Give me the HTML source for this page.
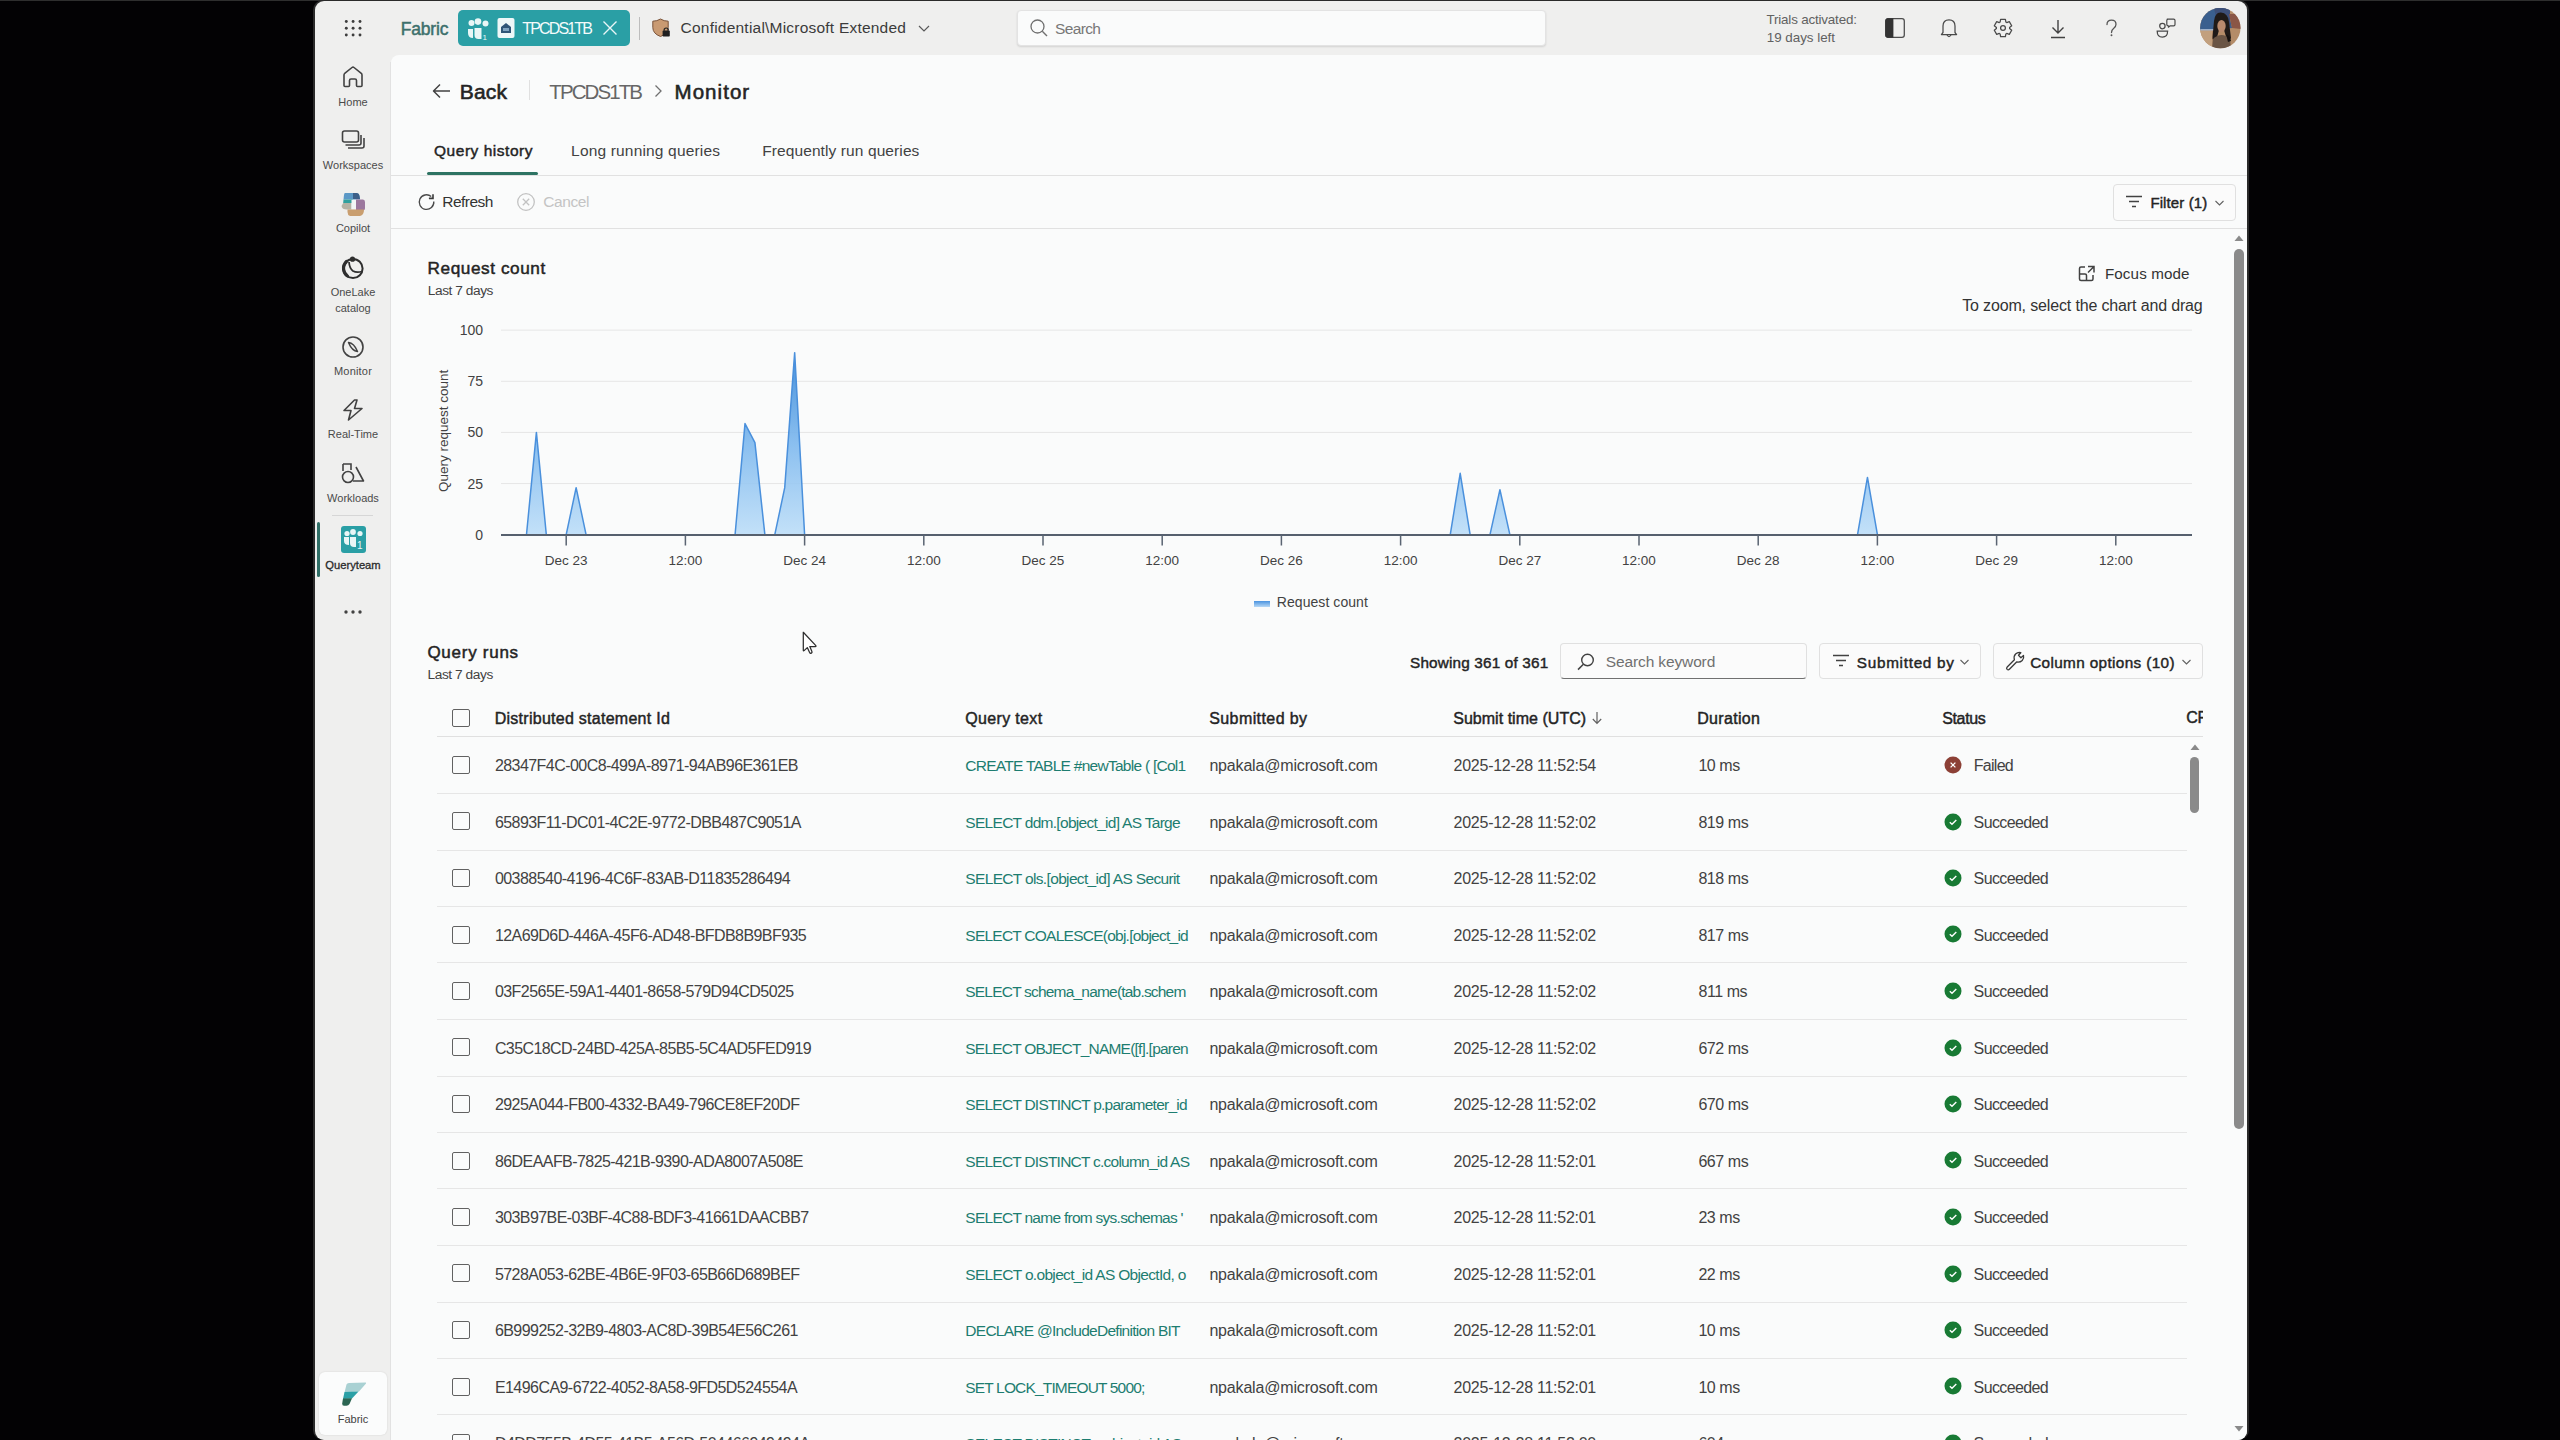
<!DOCTYPE html>
<html><head><meta charset="utf-8"><title>Monitor</title>
<style>
html,body{margin:0;padding:0;width:2560px;height:1440px;overflow:hidden;background:#030204;font-family:"Liberation Sans", sans-serif;}
.t{position:absolute;white-space:nowrap;}
.b{position:absolute;}
#win{position:absolute;left:315px;top:1px;width:1932px;height:1439px;background:#efefee;}
</style></head><body>

<div class="b" style="left:0px;top:0px;width:2560px;height:1px;background:#2e2e2e;"></div>
<div class="b" style="left:313px;top:0px;width:1936px;height:1440px;background:#2a2a2a;border-radius:10px;"></div>
<div id="clip" style="position:absolute;left:0;top:0;width:2560px;height:1440px;clip-path:inset(1px 313px 0px 315px round 9px);">
<div id="win"></div>
<div class="b" style="left:391px;top:55px;width:1856px;height:1385px;background:#fafbfb;border-top-left-radius:8px;"></div>
<div class="b" style="left:390px;top:62px;width:1px;height:1378px;background:#e2e2e2;"></div>
<svg class="b" style="left:340px;top:15px;" width="26" height="26" viewBox="0 0 26 26"><circle cx="6.300000000000011" cy="6.5" r="1.45" fill="#3d3d3d"/><circle cx="6.300000000000011" cy="13.3" r="1.45" fill="#3d3d3d"/><circle cx="6.300000000000011" cy="20.0" r="1.45" fill="#3d3d3d"/><circle cx="13.100000000000023" cy="6.5" r="1.45" fill="#3d3d3d"/><circle cx="13.100000000000023" cy="13.3" r="1.45" fill="#3d3d3d"/><circle cx="13.100000000000023" cy="20.0" r="1.45" fill="#3d3d3d"/><circle cx="20.0" cy="6.5" r="1.45" fill="#3d3d3d"/><circle cx="20.0" cy="13.3" r="1.45" fill="#3d3d3d"/><circle cx="20.0" cy="20.0" r="1.45" fill="#3d3d3d"/></svg>
<div class="t" style="left:400.8px;top:16.74px;font-size:17.5px;line-height:24px;color:#3d706c;font-weight:400;letter-spacing:-0.205px;-webkit-text-stroke:0.49px #3d706c;">Fabric</div>
<div class="b" style="left:458px;top:10px;width:172px;height:36px;background:#2a9fa5;border-radius:5px;"></div>
<svg class="b" style="left:467px;top:18px;" width="24" height="24" viewBox="0 0 24 24">
<circle cx="4.5" cy="5" r="3" fill="#e8f6f6"/>
<circle cx="11" cy="3.6" r="3.3" fill="#e8f6f6"/>
<circle cx="18.5" cy="5.6" r="3" fill="#e8f6f6"/>
<path d="M1 11 h5 v9 q-5 0 -5 -5z" fill="#e8f6f6"/>
<path d="M7.5 10 h7 v11 h-3 q-4 0 -4 -4z" fill="#e8f6f6"/>
<text x="15.5" y="22" font-size="8" fill="#e8f6f6" font-family="Liberation Sans">1</text>
</svg>
<svg class="b" style="left:497px;top:17px;" width="18" height="22" viewBox="0 0 18 22">
<rect x="0.5" y="1" width="17" height="20" rx="2" fill="#eef7f8"/>
<path d="M4 10 L9 6 L14 10 V16 H4z" fill="#2f5577"/>
<rect x="6" y="11" width="6" height="3" fill="#7fa3c0"/>
</svg>
<div class="t" style="left:522.2px;top:17.86px;font-size:16px;line-height:22px;color:#f4fbfb;font-weight:400;letter-spacing:-1.830px;">TPCDS1TB</div>
<svg class="b" style="left:602px;top:20px;" width="16" height="16" viewBox="0 0 16 16"><path d="M1.5 1.5 L14.5 14.5 M14.5 1.5 L1.5 14.5" stroke="#eaf6f6" stroke-width="1.4"/></svg>
<div class="b" style="left:639px;top:17px;width:1px;height:23px;background:#bdbdbd;"></div>
<svg class="b" style="left:650px;top:16px;" width="24" height="24" viewBox="0 0 24 24">
<path d="M10.5 3 Q14 5.2 18.2 5.2 V11.5 Q18.2 17.6 10.5 20.5 Q2.8 17.6 2.8 11.5 V5.2 Q7 5.2 10.5 3z" fill="#c99a72" stroke="#7a5238" stroke-width="1"/>
<rect x="12.6" y="14.6" width="7.2" height="6" rx="0.8" fill="#1f1f1f"/>
<path d="M14.2 14.8 V13.2 Q16.2 10.8 18.2 13.2 V14.8" stroke="#1f1f1f" stroke-width="1.2" fill="none"/>
</svg>
<div class="t" style="left:680.6px;top:17.23px;font-size:15.5px;line-height:22px;color:#3b3b3b;font-weight:400;letter-spacing:0.216px;">Confidential\Microsoft Extended</div>
<svg class="b" style="left:917px;top:23px;" width="14" height="10" viewBox="0 0 14 10"><path d="M2 3 L7 8 L12 3" stroke="#5a5a5a" stroke-width="1.2" fill="none"/></svg>
<div class="b" style="left:1017px;top:10px;width:527px;height:34px;background:#fafbfb;border:1px solid #e3e3e3;border-radius:4px;box-shadow:0 1px 2px rgba(0,0,0,0.12);"></div>
<svg class="b" style="left:1029px;top:18px;" width="20" height="20" viewBox="0 0 20 20"><circle cx="8.5" cy="8.5" r="6.5" stroke="#707070" stroke-width="1.3" fill="none"/><path d="M13.3 13.3 L18 18" stroke="#707070" stroke-width="1.4"/></svg>
<div class="t" style="left:1055.0px;top:17.53px;font-size:15.5px;line-height:22px;color:#777777;font-weight:400;letter-spacing:-0.625px;">Search</div>
<div class="t" style="left:1766.5px;top:10.46px;font-size:13.4px;line-height:19px;color:#616161;font-weight:400;letter-spacing:-0.180px;">Trials activated:</div>
<div class="t" style="left:1766.8px;top:28.36px;font-size:13.4px;line-height:19px;color:#616161;font-weight:400;letter-spacing:-0.029px;">19 days left</div>
<svg class="b" style="left:1884px;top:17px;" width="22" height="22" viewBox="0 0 22 22"><rect x="1.7" y="1.7" width="18.6" height="18.6" rx="2.3" stroke="#4e4e4e" stroke-width="1.3" fill="none"/><path d="M1.3 4 Q1.3 1.3 4 1.3 H9.4 V20.7 H4 Q1.3 20.7 1.3 18z" fill="#333333"/></svg>
<svg class="b" style="left:1939px;top:17px;" width="20" height="22" viewBox="0 0 20 22"><path d="M4 15.5 V9 Q4 2.8 10 2.8 Q16 2.8 16 9 V15.5 L17.6 17.6 H2.4z" stroke="#4a4a4a" stroke-width="1.25" fill="none" stroke-linejoin="round"/><path d="M8 18 Q10 21 12 18" stroke="#4a4a4a" stroke-width="1.25" fill="none"/></svg>
<svg class="b" style="left:1993px;top:18px;" width="20" height="20" viewBox="0 0 20 20"><path d="M7.13 4.06 L7.60 1.33 L12.40 1.33 L12.87 4.06 L13.71 4.54 L16.31 3.58 L18.71 7.74 L16.58 9.51 L16.58 10.49 L18.71 12.26 L16.31 16.42 L13.71 15.46 L12.87 15.94 L12.40 18.67 L7.60 18.67 L7.13 15.94 L6.29 15.46 L3.69 16.42 L1.29 12.26 L3.42 10.49 L3.42 9.51 L1.29 7.74 L3.69 3.58 L6.29 4.54z" stroke="#4a4a4a" stroke-width="1.25" fill="none" stroke-linejoin="round"/><circle cx="10" cy="10" r="2.4" stroke="#4a4a4a" stroke-width="1.25" fill="none"/></svg>
<svg class="b" style="left:2049px;top:19px;" width="18" height="20" viewBox="0 0 18 20"><path d="M9 1 V14 M3.5 8.5 L9 14 L14.5 8.5 M2 18.5 H16" stroke="#424242" stroke-width="1.4" fill="none"/></svg>
<svg class="b" style="left:2104px;top:18px;" width="14" height="20" viewBox="0 0 14 20"><path d="M3 6.5 Q3 2.2 7.5 2.2 Q12 2.2 12 6.3 Q12 8.6 9.8 10.2 Q7.5 11.9 7.5 14.5" stroke="#555" stroke-width="1.3" fill="none" stroke-linecap="round"/><circle cx="7.5" cy="17.3" r="0.95" fill="#555"/></svg>
<svg class="b" style="left:2155px;top:17px;" width="22" height="22" viewBox="0 0 22 22"><circle cx="7.4" cy="9.1" r="2.7" stroke="#4a4a4a" stroke-width="1.25" fill="none"/><path d="M2.2 14.2 H12.6 Q12.6 20 7.4 20 Q2.2 20 2.2 14.2z" stroke="#4a4a4a" stroke-width="1.25" fill="none"/><path d="M12.2 2.2 H18.6 Q20 2.2 20 3.6 V7.4 Q20 8.8 18.6 8.8 H15.2 L13.4 10.2 V8.8 Q11.8 8.8 11.8 7.4 V3.6 Q11.8 2.2 13.2 2.2z" stroke="#4a4a4a" stroke-width="1.2" fill="none" stroke-linejoin="round"/></svg>
<svg class="b" style="left:2200px;top:8px;" width="41" height="41" viewBox="0 0 41 41">
<defs><clipPath id="av"><circle cx="20.3" cy="20.1" r="20.2"/></clipPath></defs>
<g clip-path="url(#av)">
<rect width="41" height="41" fill="#b48c68"/>
<rect x="0" y="22" width="12" height="19" fill="#c2a07e"/>
<path d="M0 0 H30 L29 6 L32 20 L12 22 L0 22z" fill="#3a5f8e"/>
<path d="M14 0 H30 V18 H18z" fill="#3d4f78"/>
<path d="M29 6 L41 6 V21 L32 20z" fill="#8a5646"/>
<rect x="0" y="21" width="14" height="1.5" fill="#9fb0c8"/>
<path d="M14 13 Q15 4 21 4.5 Q28 5 29 14 L31 30 Q30 33 27 32 L24 22 H19 L16 33 Q12 33 12.5 29z" fill="#1f1a18"/>
<ellipse cx="21.5" cy="18" rx="4.2" ry="6" fill="#b88a6e"/>
<path d="M12 41 L13 31 Q17 27 21.5 27 Q26 27 30 31 L31 41z" fill="#6a5545"/>
<path d="M26 26 Q30 28 31 33 L28 34z" fill="#161210"/>
</g>
</svg>
<svg class="b" style="left:341px;top:65px;" width="24" height="24" viewBox="0 0 24 24"><path d="M3 20.5 V10 Q3 9 4 8.2 L11 2.5 Q12 1.7 13 2.5 L20 8.2 Q21 9 21 10 V20.5 Q21 21.5 20 21.5 H16.5 Q15.5 21.5 15.5 20.5 V15.5 Q15.5 14 14 14 H10 Q8.5 14 8.5 15.5 V20.5 Q8.5 21.5 7.5 21.5 H4 Q3 21.5 3 20.5z" stroke="#424242" stroke-width="1.6" fill="none" stroke-linejoin="round"/></svg>
<div class="t" style="left:153px;width:400px;text-align:center;top:94.5px;font-size:11px;line-height:15px;color:#4a4a4a;font-weight:400;">Home</div>
<svg class="b" style="left:341px;top:129px;" width="25" height="23" viewBox="0 0 25 23"><rect x="1.5" y="2" width="16" height="11" rx="2" stroke="#424242" stroke-width="1.6" fill="none"/><path d="M20 6 V14 Q20 16 18 16 H4.5" stroke="#424242" stroke-width="1.6" fill="none"/><path d="M23 9 V17 Q23 19 21 19 H7" stroke="#424242" stroke-width="1.6" fill="none"/></svg>
<div class="t" style="left:153px;width:400px;text-align:center;top:158.0px;font-size:11px;line-height:15px;color:#4a4a4a;font-weight:400;">Workspaces</div>
<svg class="b" style="left:335px;top:185px;" width="36" height="36" viewBox="0 0 36 36">
<path d="M10 8 Q11 8 12 8 H21 Q24 8 24.5 11 L25 14.5 H8.5 L9 10 Q9.3 8 10 8z" fill="#5b98c6"/>
<path d="M18 8 H21.5 Q24 8 24.5 11 L25 14 H18z" fill="#3c5f88"/>
<path d="M8.5 14.5 H17.5 V18 H8.2z" fill="#30a09e"/>
<path d="M8.2 18 H16.5 V24.5 H12 Q7 24.5 6.5 21z" fill="#b4b2a4"/>
<path d="M16.5 15 H21 V24 H16.5z" fill="#f2f6f6"/>
<path d="M21 14.5 H28 Q30 14.5 30 17 V23 Q30 25.5 27.5 25.5 H21z" fill="#9c789e"/>
<path d="M12.5 24.5 H29 Q29 30 25 31 H15 Q12.5 30 12.5 27z" fill="#c99e6f"/>
</svg>
<div class="t" style="left:153px;width:400px;text-align:center;top:221.0px;font-size:11px;line-height:15px;color:#4a4a4a;font-weight:400;">Copilot</div>
<svg class="b" style="left:341px;top:256px;" width="24" height="24" viewBox="0 0 24 24"><circle cx="12" cy="12.5" r="9.6" stroke="#2e2e2e" stroke-width="2" fill="none"/><path d="M5.5 5.5 Q2 9 2.6 13.5 Q3.3 18 6.5 20" stroke="#2e2e2e" stroke-width="3.2" fill="none" stroke-linecap="round"/><circle cx="11.5" cy="3.2" r="2.6" fill="#2e2e2e"/><path d="M8 6 Q8.5 12.5 12 15 Q15.5 17 21 15.5" stroke="#2e2e2e" stroke-width="1.8" fill="none"/></svg>
<div class="t" style="left:153px;width:400px;text-align:center;top:285.0px;font-size:11px;line-height:15px;color:#4a4a4a;font-weight:400;">OneLake</div>
<div class="t" style="left:153px;width:400px;text-align:center;top:300.5px;font-size:11px;line-height:15px;color:#4a4a4a;font-weight:400;">catalog</div>
<svg class="b" style="left:341px;top:335px;" width="24" height="24" viewBox="0 0 24 24"><circle cx="12" cy="12" r="10" stroke="#424242" stroke-width="1.6" fill="none"/><path d="M7.5 7.5 Q13 8 16.5 16.5 Q11 16 7.5 7.5z" stroke="#424242" stroke-width="1.5" fill="none" stroke-linejoin="round"/></svg>
<div class="t" style="left:153px;width:400px;text-align:center;top:364.0px;font-size:11px;line-height:15px;color:#4a4a4a;font-weight:400;letter-spacing:0.2px;">Monitor</div>
<svg class="b" style="left:341px;top:398px;" width="24" height="24" viewBox="0 0 24 24"><path d="M13.5 2 L3 12.5 H10 L7.5 22 L21 10.5 H13.5 L16 2z" stroke="#424242" stroke-width="1.6" fill="none" stroke-linejoin="round"/></svg>
<div class="t" style="left:153px;width:400px;text-align:center;top:427.0px;font-size:11px;line-height:15px;color:#4a4a4a;font-weight:400;">Real-Time</div>
<svg class="b" style="left:341px;top:462px;" width="24" height="22" viewBox="0 0 24 22"><path d="M2 2 H10 V8" stroke="#424242" stroke-width="1.6" fill="none"/><path d="M2 2 V9" stroke="#424242" stroke-width="1.6"/><circle cx="7" cy="15" r="5.5" stroke="#424242" stroke-width="1.6" fill="none"/><path d="M15 5 L22.5 19 H12" stroke="#424242" stroke-width="1.6" fill="none" stroke-linejoin="round"/></svg>
<div class="t" style="left:153px;width:400px;text-align:center;top:490.5px;font-size:11px;line-height:15px;color:#4a4a4a;font-weight:400;">Workloads</div>
<div class="b" style="left:332px;top:515px;width:41px;height:1px;background:#d6d6d6;"></div>
<div class="b" style="left:317px;top:522px;width:3px;height:55px;background:#2f6e66;border-radius:2px;"></div>
<svg class="b" style="left:341px;top:526px;" width="25" height="27" viewBox="0 0 25 27">
<rect x="0" y="0" width="25" height="27" rx="3" fill="#2a9fa5"/>
<circle cx="6" cy="7.5" r="2.6" fill="#e8f6f6"/><circle cx="12" cy="6" r="2.9" fill="#e8f6f6"/><circle cx="19" cy="7.5" r="2.6" fill="#e8f6f6"/>
<path d="M3 11 h5 v8 q-5 0 -5 -4z" fill="#e8f6f6"/><path d="M9 11 h6 v10 h-2 q-4 0 -4 -4z" fill="#e8f6f6"/>
<text x="16" y="23" font-size="10" fill="#e8f6f6" font-family="Liberation Sans">1</text>
</svg>
<div class="t" style="left:153px;width:400px;text-align:center;top:556.5px;font-size:11.2px;line-height:16px;color:#2a2a2a;font-weight:400;-webkit-text-stroke:0.3px #2a2a2a;">Queryteam</div>
<svg class="b" style="left:343px;top:607px;" width="20" height="10" viewBox="0 0 20 10"><circle cx="3" cy="5" r="1.7" fill="#424242"/><circle cx="10" cy="5" r="1.7" fill="#424242"/><circle cx="17" cy="5" r="1.7" fill="#424242"/></svg>
<div class="b" style="left:319px;top:1372px;width:68px;height:63px;background:#fbfcfc;border-radius:6px;box-shadow:0 0 2px rgba(0,0,0,0.12);"></div>
<svg class="b" style="left:338px;top:1380px;" width="30" height="30" viewBox="0 0 30 30">
<path d="M8.5 4.5 Q9 3 11 3 L27.5 2.5 Q28.5 2.5 28 3.5 L21 11.5 L6.5 12.5z" fill="#a9d1d3"/>
<path d="M6.5 12 L20.5 11.5 L14 18.5 L5 19z" fill="#2ba0a6"/>
<path d="M5 18.5 L14 18.2 L11.5 24 Q10.5 25.8 8.5 25.8 L6 25.8 Q4 25.8 4.2 23.5z" fill="#2b6552"/>
</svg>
<div class="t" style="left:153px;width:400px;text-align:center;top:1411.5px;font-size:11px;line-height:15px;color:#424242;font-weight:400;">Fabric</div>
<svg class="b" style="left:432px;top:83px;" width="19" height="16" viewBox="0 0 19 16"><path d="M8 1.5 L1.5 8 L8 14.5 M1.5 8 H18" stroke="#424242" stroke-width="1.5" fill="none" stroke-linejoin="round"/></svg>
<div class="t" style="left:459.7px;top:77.02px;font-size:21px;line-height:29px;color:#242424;font-weight:400;letter-spacing:0.209px;-webkit-text-stroke:0.59px #242424;">Back</div>
<div class="b" style="left:529px;top:80px;width:1px;height:20px;background:#e0e0e0;"></div>
<div class="t" style="left:549.3px;top:76.70px;font-size:20.5px;line-height:29px;color:#666666;font-weight:400;letter-spacing:-1.921px;">TPCDS1TB</div>
<svg class="b" style="left:653px;top:84px;" width="10" height="14" viewBox="0 0 10 14"><path d="M2.5 1.5 L8 7 L2.5 12.5" stroke="#707070" stroke-width="1.3" fill="none"/></svg>
<div class="t" style="left:674.5px;top:76.70px;font-size:20.5px;line-height:29px;color:#242424;font-weight:400;letter-spacing:1.054px;-webkit-text-stroke:0.58px #242424;">Monitor</div>
<div class="t" style="left:434.0px;top:139.73px;font-size:15.5px;line-height:22px;color:#242424;font-weight:400;letter-spacing:0.526px;-webkit-text-stroke:0.44px #242424;">Query history</div>
<div class="t" style="left:571.1px;top:139.73px;font-size:15.5px;line-height:22px;color:#424242;font-weight:400;letter-spacing:0.169px;">Long running queries</div>
<div class="t" style="left:762.2px;top:139.73px;font-size:15.5px;line-height:22px;color:#424242;font-weight:400;letter-spacing:0.099px;">Frequently run queries</div>
<div class="b" style="left:391px;top:175px;width:1856px;height:1px;background:#e1e1e1;"></div>
<div class="b" style="left:427px;top:172px;width:111px;height:3px;background:#2d7363;border-radius:2px;"></div>
<svg class="b" style="left:417px;top:193px;" width="20" height="20" viewBox="0 0 20 20"><path d="M14.2 3.5 A7.3 7.3 0 1 0 16.8 8.5" stroke="#4a4a4a" stroke-width="1.35" fill="none"/><path d="M16 1.2 V5.4 H11.9" stroke="#3a3a3a" stroke-width="1.6" fill="none" stroke-linejoin="miter"/></svg>
<div class="t" style="left:442.2px;top:190.53px;font-size:15.5px;line-height:22px;color:#333333;font-weight:400;letter-spacing:-0.497px;">Refresh</div>
<svg class="b" style="left:516px;top:192px;" width="20" height="20" viewBox="0 0 20 20"><circle cx="10" cy="10" r="8.3" stroke="#c2c2c2" stroke-width="1.3" fill="none"/><path d="M6.8 6.8 L13.2 13.2 M13.2 6.8 L6.8 13.2" stroke="#c2c2c2" stroke-width="1.3"/></svg>
<div class="t" style="left:543.3px;top:190.53px;font-size:15.5px;line-height:22px;color:#c4c4c4;font-weight:400;letter-spacing:-0.430px;">Cancel</div>
<div class="b" style="left:2113px;top:184px;width:121px;height:35px;border:1px solid #e0e0e0;border-radius:4px;background:#fbfbfb;"></div>
<svg class="b" style="left:2125px;top:195px;" width="18" height="13" viewBox="0 0 18 13"><path d="M1 1.5 H17 M4 6.5 H14 M7 11.5 H11" stroke="#424242" stroke-width="1.5"/></svg>
<div class="t" style="left:2150.4px;top:191.80px;font-size:15px;line-height:21px;color:#242424;font-weight:400;letter-spacing:0.106px;-webkit-text-stroke:0.42px #242424;">Filter (1)</div>
<svg class="b" style="left:2214px;top:199px;" width="11" height="8" viewBox="0 0 11 8"><path d="M1.5 2 L5.5 6 L9.5 2" stroke="#616161" stroke-width="1.1" fill="none"/></svg>
<div class="b" style="left:391px;top:228px;width:1856px;height:1px;background:#e1e1e1;"></div>
<div class="t" style="left:427.6px;top:256.34px;font-size:17.2px;line-height:24px;color:#242424;font-weight:400;letter-spacing:0.569px;-webkit-text-stroke:0.48px #242424;">Request count</div>
<div class="t" style="left:427.8px;top:280.55px;font-size:13.7px;line-height:19px;color:#424242;font-weight:400;letter-spacing:-0.437px;">Last 7 days</div>
<svg class="b" style="left:2078px;top:265px;" width="18" height="17" viewBox="0 0 18 17"><path d="M7 2 H3 Q1.5 2 1.5 3.5 V14 Q1.5 15.5 3 15.5 H13.5 Q15 15.5 15 14 V10" stroke="#424242" stroke-width="1.5" fill="none"/><path d="M1.5 9 H7 Q8.5 9 8.5 10.5 V15.5" stroke="#424242" stroke-width="1.5" fill="none"/><path d="M10 1.5 H16 V7.5 M16 1.5 L10 7.5" stroke="#424242" stroke-width="1.5" fill="none"/></svg>
<div class="t" style="left:2104.9px;top:262.93px;font-size:15.2px;line-height:21px;color:#333333;font-weight:400;letter-spacing:0.121px;">Focus mode</div>
<div class="t" style="left:1962.2px;top:294.66px;font-size:16px;line-height:22px;color:#333333;font-weight:400;letter-spacing:-0.148px;">To zoom, select the chart and drag</div>
<svg class="b" style="left:410px;top:320px;" width="1800" height="240" viewBox="0 0 1800 240"><defs><linearGradient id="fg" x1="0" y1="10" x2="0" y2="215" gradientUnits="userSpaceOnUse"><stop offset="0" stop-color="#3282d4" stop-opacity="1"/><stop offset="0.55" stop-color="#7db8ee" stop-opacity="0.9"/><stop offset="1" stop-color="#b9dcf8" stop-opacity="0.85"/></linearGradient></defs><rect x="91" y="163.06" width="1691" height="1" fill="#e6e6e6"/><rect x="91" y="111.92" width="1691" height="1" fill="#e6e6e6"/><rect x="91" y="60.78" width="1691" height="1" fill="#e6e6e6"/><rect x="91" y="9.64" width="1691" height="1" fill="#e6e6e6"/><path d="M106.53 214.70 L106.53 214.70 L116.47 214.70 L126.40 112.42 L136.33 214.70 L146.27 214.70 L156.20 214.70 L166.13 167.65 L176.07 214.70 L186.00 214.70 L195.93 214.70 L205.87 214.70 L215.80 214.70 L225.73 214.70 L235.67 214.70 L245.60 214.70 L255.53 214.70 L265.47 214.70 L275.40 214.70 L285.33 214.70 L295.27 214.70 L305.20 214.70 L315.13 214.70 L325.07 214.70 L335.00 103.62 L344.93 122.65 L354.87 214.70 L364.80 214.70 L374.73 167.65 L384.67 32.64 L394.60 214.70 L404.53 214.70 L414.47 214.70 L424.40 214.70 L434.33 214.70 L444.27 214.70 L454.20 214.70 L464.13 214.70 L474.07 214.70 L484.00 214.70 L493.93 214.70 L503.87 214.70 L513.80 214.70 L523.73 214.70 L533.67 214.70 L543.60 214.70 L553.53 214.70 L563.47 214.70 L573.40 214.70 L583.33 214.70 L593.27 214.70 L603.20 214.70 L613.13 214.70 L623.07 214.70 L633.00 214.70 L642.93 214.70 L652.87 214.70 L662.80 214.70 L672.73 214.70 L682.66 214.70 L692.60 214.70 L702.53 214.70 L712.46 214.70 L722.40 214.70 L732.33 214.70 L742.26 214.70 L752.20 214.70 L762.13 214.70 L772.06 214.70 L782.00 214.70 L791.93 214.70 L801.86 214.70 L811.80 214.70 L821.73 214.70 L831.66 214.70 L841.60 214.70 L851.53 214.70 L861.46 214.70 L871.40 214.70 L881.33 214.70 L891.26 214.70 L901.20 214.70 L911.13 214.70 L921.06 214.70 L931.00 214.70 L940.93 214.70 L950.86 214.70 L960.80 214.70 L970.73 214.70 L980.66 214.70 L990.60 214.70 L1000.53 214.70 L1010.46 214.70 L1020.40 214.70 L1030.33 214.70 L1040.26 214.70 L1050.20 153.33 L1060.13 214.70 L1070.06 214.70 L1080.00 214.70 L1089.93 169.70 L1099.86 214.70 L1109.80 214.70 L1119.73 214.70 L1129.66 214.70 L1139.60 214.70 L1149.53 214.70 L1159.46 214.70 L1169.40 214.70 L1179.33 214.70 L1189.26 214.70 L1199.20 214.70 L1209.13 214.70 L1219.06 214.70 L1229.00 214.70 L1238.93 214.70 L1248.86 214.70 L1258.80 214.70 L1268.73 214.70 L1278.66 214.70 L1288.60 214.70 L1298.53 214.70 L1308.46 214.70 L1318.40 214.70 L1328.33 214.70 L1338.26 214.70 L1348.20 214.70 L1358.13 214.70 L1368.06 214.70 L1378.00 214.70 L1387.93 214.70 L1397.86 214.70 L1407.80 214.70 L1417.73 214.70 L1427.66 214.70 L1437.60 214.70 L1447.53 214.70 L1457.46 157.42 L1467.40 214.70 L1477.33 214.70 L1487.26 214.70 L1497.20 214.70 L1507.13 214.70 L1517.06 214.70 L1527.00 214.70 L1536.93 214.70 L1546.86 214.70 L1556.80 214.70 L1566.73 214.70 L1576.66 214.70 L1586.60 214.70 L1596.53 214.70 L1606.46 214.70 L1616.40 214.70 L1626.33 214.70 L1636.26 214.70 L1646.19 214.70 L1656.13 214.70 L1666.06 214.70 L1675.99 214.70 L1685.93 214.70 L1695.86 214.70 L1705.79 214.70 L1715.73 214.70 L1725.66 214.70 L1735.59 214.70 L1745.53 214.70 L1755.46 214.70 L1765.39 214.70 L1765.39 214.70z" fill="url(#fg)" transform="translate(0,0)"/><path d="M106.53 214.70 L116.47 214.70 L126.40 112.42 L136.33 214.70 L146.27 214.70 L156.20 214.70 L166.13 167.65 L176.07 214.70 L186.00 214.70 L195.93 214.70 L205.87 214.70 L215.80 214.70 L225.73 214.70 L235.67 214.70 L245.60 214.70 L255.53 214.70 L265.47 214.70 L275.40 214.70 L285.33 214.70 L295.27 214.70 L305.20 214.70 L315.13 214.70 L325.07 214.70 L335.00 103.62 L344.93 122.65 L354.87 214.70 L364.80 214.70 L374.73 167.65 L384.67 32.64 L394.60 214.70 L404.53 214.70 L414.47 214.70 L424.40 214.70 L434.33 214.70 L444.27 214.70 L454.20 214.70 L464.13 214.70 L474.07 214.70 L484.00 214.70 L493.93 214.70 L503.87 214.70 L513.80 214.70 L523.73 214.70 L533.67 214.70 L543.60 214.70 L553.53 214.70 L563.47 214.70 L573.40 214.70 L583.33 214.70 L593.27 214.70 L603.20 214.70 L613.13 214.70 L623.07 214.70 L633.00 214.70 L642.93 214.70 L652.87 214.70 L662.80 214.70 L672.73 214.70 L682.66 214.70 L692.60 214.70 L702.53 214.70 L712.46 214.70 L722.40 214.70 L732.33 214.70 L742.26 214.70 L752.20 214.70 L762.13 214.70 L772.06 214.70 L782.00 214.70 L791.93 214.70 L801.86 214.70 L811.80 214.70 L821.73 214.70 L831.66 214.70 L841.60 214.70 L851.53 214.70 L861.46 214.70 L871.40 214.70 L881.33 214.70 L891.26 214.70 L901.20 214.70 L911.13 214.70 L921.06 214.70 L931.00 214.70 L940.93 214.70 L950.86 214.70 L960.80 214.70 L970.73 214.70 L980.66 214.70 L990.60 214.70 L1000.53 214.70 L1010.46 214.70 L1020.40 214.70 L1030.33 214.70 L1040.26 214.70 L1050.20 153.33 L1060.13 214.70 L1070.06 214.70 L1080.00 214.70 L1089.93 169.70 L1099.86 214.70 L1109.80 214.70 L1119.73 214.70 L1129.66 214.70 L1139.60 214.70 L1149.53 214.70 L1159.46 214.70 L1169.40 214.70 L1179.33 214.70 L1189.26 214.70 L1199.20 214.70 L1209.13 214.70 L1219.06 214.70 L1229.00 214.70 L1238.93 214.70 L1248.86 214.70 L1258.80 214.70 L1268.73 214.70 L1278.66 214.70 L1288.60 214.70 L1298.53 214.70 L1308.46 214.70 L1318.40 214.70 L1328.33 214.70 L1338.26 214.70 L1348.20 214.70 L1358.13 214.70 L1368.06 214.70 L1378.00 214.70 L1387.93 214.70 L1397.86 214.70 L1407.80 214.70 L1417.73 214.70 L1427.66 214.70 L1437.60 214.70 L1447.53 214.70 L1457.46 157.42 L1467.40 214.70 L1477.33 214.70 L1487.26 214.70 L1497.20 214.70 L1507.13 214.70 L1517.06 214.70 L1527.00 214.70 L1536.93 214.70 L1546.86 214.70 L1556.80 214.70 L1566.73 214.70 L1576.66 214.70 L1586.60 214.70 L1596.53 214.70 L1606.46 214.70 L1616.40 214.70 L1626.33 214.70 L1636.26 214.70 L1646.19 214.70 L1656.13 214.70 L1666.06 214.70 L1675.99 214.70 L1685.93 214.70 L1695.86 214.70 L1705.79 214.70 L1715.73 214.70 L1725.66 214.70 L1735.59 214.70 L1745.53 214.70 L1755.46 214.70 L1765.39 214.70" stroke="#4a90dc" stroke-width="1.5" fill="none" stroke-linejoin="round"/><rect x="91" y="214" width="1691" height="2" fill="#56606e"/><rect x="155.45" y="215" width="1.5" height="10.5" fill="#5a6472"/><rect x="274.65" y="215" width="1.5" height="10.5" fill="#5a6472"/><rect x="393.85" y="215" width="1.5" height="10.5" fill="#5a6472"/><rect x="513.05" y="215" width="1.5" height="10.5" fill="#5a6472"/><rect x="632.25" y="215" width="1.5" height="10.5" fill="#5a6472"/><rect x="751.45" y="215" width="1.5" height="10.5" fill="#5a6472"/><rect x="870.65" y="215" width="1.5" height="10.5" fill="#5a6472"/><rect x="989.85" y="215" width="1.5" height="10.5" fill="#5a6472"/><rect x="1109.05" y="215" width="1.5" height="10.5" fill="#5a6472"/><rect x="1228.25" y="215" width="1.5" height="10.5" fill="#5a6472"/><rect x="1347.45" y="215" width="1.5" height="10.5" fill="#5a6472"/><rect x="1466.65" y="215" width="1.5" height="10.5" fill="#5a6472"/><rect x="1585.85" y="215" width="1.5" height="10.5" fill="#5a6472"/><rect x="1705.04" y="215" width="1.5" height="10.5" fill="#5a6472"/></svg>
<div class="t" style="right:2077px;top:524.7px;font-size:14px;line-height:20px;color:#424242;font-weight:400;">0</div>
<div class="t" style="right:2077px;top:473.6px;font-size:14px;line-height:20px;color:#424242;font-weight:400;">25</div>
<div class="t" style="right:2077px;top:422.4px;font-size:14px;line-height:20px;color:#424242;font-weight:400;">50</div>
<div class="t" style="right:2077px;top:371.3px;font-size:14px;line-height:20px;color:#424242;font-weight:400;">75</div>
<div class="t" style="right:2077px;top:320.1px;font-size:14px;line-height:20px;color:#424242;font-weight:400;">100</div>
<div class="t" style="left:366.20000000000005px;width:400px;text-align:center;top:551.0px;font-size:13.5px;line-height:19px;color:#424242;font-weight:400;">Dec 23</div>
<div class="t" style="left:485.3996000000001px;width:400px;text-align:center;top:551.0px;font-size:13.5px;line-height:19px;color:#424242;font-weight:400;">12:00</div>
<div class="t" style="left:604.5992px;width:400px;text-align:center;top:551.0px;font-size:13.5px;line-height:19px;color:#424242;font-weight:400;">Dec 24</div>
<div class="t" style="left:723.7988px;width:400px;text-align:center;top:551.0px;font-size:13.5px;line-height:19px;color:#424242;font-weight:400;">12:00</div>
<div class="t" style="left:842.9984px;width:400px;text-align:center;top:551.0px;font-size:13.5px;line-height:19px;color:#424242;font-weight:400;">Dec 25</div>
<div class="t" style="left:962.1979999999999px;width:400px;text-align:center;top:551.0px;font-size:13.5px;line-height:19px;color:#424242;font-weight:400;">12:00</div>
<div class="t" style="left:1081.3976px;width:400px;text-align:center;top:551.0px;font-size:13.5px;line-height:19px;color:#424242;font-weight:400;">Dec 26</div>
<div class="t" style="left:1200.5972px;width:400px;text-align:center;top:551.0px;font-size:13.5px;line-height:19px;color:#424242;font-weight:400;">12:00</div>
<div class="t" style="left:1319.7968px;width:400px;text-align:center;top:551.0px;font-size:13.5px;line-height:19px;color:#424242;font-weight:400;">Dec 27</div>
<div class="t" style="left:1438.9964px;width:400px;text-align:center;top:551.0px;font-size:13.5px;line-height:19px;color:#424242;font-weight:400;">12:00</div>
<div class="t" style="left:1558.196px;width:400px;text-align:center;top:551.0px;font-size:13.5px;line-height:19px;color:#424242;font-weight:400;">Dec 28</div>
<div class="t" style="left:1677.3955999999998px;width:400px;text-align:center;top:551.0px;font-size:13.5px;line-height:19px;color:#424242;font-weight:400;">12:00</div>
<div class="t" style="left:1796.5952px;width:400px;text-align:center;top:551.0px;font-size:13.5px;line-height:19px;color:#424242;font-weight:400;">Dec 29</div>
<div class="t" style="left:1915.7947999999997px;width:400px;text-align:center;top:551.0px;font-size:13.5px;line-height:19px;color:#424242;font-weight:400;">12:00</div>
<div class="t" style="left:384px;top:422px;width:120px;text-align:center;font-size:13.5px;line-height:20px;color:#424242;transform:rotate(-90deg);">Query request count</div>
<div class="b" style="left:1254px;top:601px;width:16px;height:6px;background:linear-gradient(#4a93e0,#b6d8f6);"></div>
<div class="t" style="left:1276.8px;top:592.05px;font-size:14px;line-height:20px;color:#424242;font-weight:400;letter-spacing:0.062px;">Request count</div>
<div class="t" style="left:427.4px;top:640.91px;font-size:17px;line-height:24px;color:#242424;font-weight:400;letter-spacing:0.738px;-webkit-text-stroke:0.48px #242424;">Query runs</div>
<div class="t" style="left:427.6px;top:665.35px;font-size:13.7px;line-height:19px;color:#424242;font-weight:400;letter-spacing:-0.437px;">Last 7 days</div>
<div class="t" style="left:1410.0px;top:651.50px;font-size:15.3px;line-height:21px;color:#242424;font-weight:400;letter-spacing:0.173px;-webkit-text-stroke:0.43px #242424;">Showing 361 of 361</div>
<div class="b" style="left:1560px;top:643px;width:247px;height:36px;border:1px solid #e0e0e0;border-bottom:1px solid #707070;border-radius:4px;background:#fbfbfb;box-sizing:border-box;"></div>
<svg class="b" style="left:1576px;top:652px;" width="20" height="20" viewBox="0 0 20 20"><circle cx="11.5" cy="8" r="5.8" stroke="#424242" stroke-width="1.4" fill="none"/><path d="M7.4 12.2 L2 17.6" stroke="#424242" stroke-width="1.5"/></svg>
<div class="t" style="left:1605.8px;top:650.93px;font-size:15.5px;line-height:22px;color:#707070;font-weight:400;letter-spacing:-0.127px;">Search keyword</div>
<div class="b" style="left:1819px;top:643px;width:162px;height:36px;border:1px solid #e0e0e0;border-radius:4px;background:#fbfbfb;box-sizing:border-box;"></div>
<svg class="b" style="left:1832px;top:654px;" width="18" height="13" viewBox="0 0 18 13"><path d="M1 1.5 H17 M4 6.5 H14 M7 11.5 H11" stroke="#424242" stroke-width="1.5"/></svg>
<div class="t" style="left:1856.8px;top:651.50px;font-size:15.3px;line-height:21px;color:#242424;font-weight:400;letter-spacing:0.712px;-webkit-text-stroke:0.43px #242424;">Submitted by</div>
<svg class="b" style="left:1959px;top:658px;" width="11" height="8" viewBox="0 0 11 8"><path d="M1.5 2 L5.5 6 L9.5 2" stroke="#616161" stroke-width="1.1" fill="none"/></svg>
<div class="b" style="left:1993px;top:643px;width:210px;height:36px;border:1px solid #e0e0e0;border-radius:4px;background:#fbfbfb;box-sizing:border-box;"></div>
<svg class="b" style="left:2005px;top:651px;" width="22" height="22" viewBox="0 0 22 22"><path d="M9.4 8.8 Q8.4 5.2 10.6 3 Q12.9 0.9 15.8 1.7 L13.5 4.3 L15.9 6.7 L18.5 4.4 Q19.3 7.3 17.2 9.5 Q15 11.7 11.6 11 L4.4 18.3 Q3.2 19.5 2.1 18.4 Q1 17.2 2.2 16z" stroke="#3a3a3a" stroke-width="1.3" fill="none" stroke-linejoin="round"/></svg>
<div class="t" style="left:2030.2px;top:651.50px;font-size:15.3px;line-height:21px;color:#242424;font-weight:400;letter-spacing:0.366px;-webkit-text-stroke:0.43px #242424;">Column options (10)</div>
<svg class="b" style="left:2181px;top:658px;" width="11" height="8" viewBox="0 0 11 8"><path d="M1.5 2 L5.5 6 L9.5 2" stroke="#616161" stroke-width="1.1" fill="none"/></svg>
<div class="b" style="left:452px;top:709px;width:18px;height:18px;border:1.3px solid #616161;border-radius:2px;box-sizing:border-box;"></div>
<div class="t" style="left:494.7px;top:707.56px;font-size:16px;line-height:22px;color:#242424;font-weight:400;letter-spacing:0.268px;-webkit-text-stroke:0.45px #242424;">Distributed statement Id</div>
<div class="t" style="left:965.2px;top:707.56px;font-size:16px;line-height:22px;color:#242424;font-weight:400;letter-spacing:0.349px;-webkit-text-stroke:0.45px #242424;">Query text</div>
<div class="t" style="left:1209.2px;top:707.56px;font-size:16px;line-height:22px;color:#242424;font-weight:400;letter-spacing:0.413px;-webkit-text-stroke:0.45px #242424;">Submitted by</div>
<div class="t" style="left:1453.2px;top:707.56px;font-size:16px;line-height:22px;color:#242424;font-weight:400;letter-spacing:0.028px;-webkit-text-stroke:0.45px #242424;">Submit time (UTC)</div>
<div class="t" style="left:1697.2px;top:707.56px;font-size:16px;line-height:22px;color:#242424;font-weight:400;letter-spacing:0.324px;-webkit-text-stroke:0.45px #242424;">Duration</div>
<div class="t" style="left:1942.2px;top:707.56px;font-size:16px;line-height:22px;color:#242424;font-weight:400;letter-spacing:-0.358px;-webkit-text-stroke:0.45px #242424;">Status</div>
<svg class="b" style="left:1591px;top:711px;" width="12" height="14" viewBox="0 0 12 14"><path d="M6 1 V12 M1.8 8 L6 12.3 L10.2 8" stroke="#616161" stroke-width="1.2" fill="none"/></svg>
<div class="t" style="left:2186.2px;top:707.4px;width:16.8px;overflow:hidden;font-size:16px;line-height:22px;color:#242424;font-weight:400;-webkit-text-stroke:0.45px #242424;letter-spacing:-0.3px;">CPU</div>
<div class="b" style="left:437px;top:736px;width:1766px;height:1px;background:#e0e0e0;"></div>
<div class="b" style="left:452px;top:756px;width:18px;height:18px;border:1.3px solid #616161;border-radius:2px;box-sizing:border-box;"></div>
<div class="t" style="left:494.9px;top:755.26px;font-size:16px;line-height:22px;color:#424242;font-weight:400;letter-spacing:-0.553px;">28347F4C-00C8-499A-8971-94AB96E361EB</div>
<div class="t" style="left:965.3px;top:755.43px;width:227px;overflow:hidden;font-size:15.5px;line-height:22px;color:#1d7d70;letter-spacing:-0.731px;">CREATE TABLE #newTable ( [Col1 </div>
<div class="t" style="left:1209.4px;top:755.26px;font-size:16px;line-height:22px;color:#424242;font-weight:400;letter-spacing:-0.173px;">npakala@microsoft.com</div>
<div class="t" style="left:1453.6px;top:755.26px;font-size:16px;line-height:22px;color:#424242;font-weight:400;letter-spacing:-0.264px;">2025-12-28 11:52:54</div>
<div class="t" style="left:1698.4px;top:755.26px;font-size:16px;line-height:22px;color:#424242;font-weight:400;letter-spacing:-0.436px;">10 ms</div>
<svg class="b" style="left:1943px;top:755px;" width="20" height="20" viewBox="0 0 20 20"><circle cx="10" cy="10" r="8.5" fill="#8c4036"/><path d="M7.6 7.6 L12.4 12.4 M12.4 7.6 L7.6 12.4" stroke="#fff" stroke-width="1.3"/></svg>
<div class="t" style="left:1973.8px;top:755.26px;font-size:16px;line-height:22px;color:#424242;font-weight:400;letter-spacing:-0.725px;">Failed</div>
<div class="b" style="left:437px;top:793px;width:1750px;height:1px;background:#e6e6e6;"></div>
<div class="b" style="left:452px;top:812px;width:18px;height:18px;border:1.3px solid #616161;border-radius:2px;box-sizing:border-box;"></div>
<div class="t" style="left:494.9px;top:811.76px;font-size:16px;line-height:22px;color:#424242;font-weight:400;letter-spacing:-0.559px;">65893F11-DC01-4C2E-9772-DBB487C9051A</div>
<div class="t" style="left:965.3px;top:811.93px;width:227px;overflow:hidden;font-size:15.5px;line-height:22px;color:#1d7d70;letter-spacing:-0.701px;">SELECT ddm.[object_id] AS Targe</div>
<div class="t" style="left:1209.4px;top:811.76px;font-size:16px;line-height:22px;color:#424242;font-weight:400;letter-spacing:-0.173px;">npakala@microsoft.com</div>
<div class="t" style="left:1453.6px;top:811.76px;font-size:16px;line-height:22px;color:#424242;font-weight:400;letter-spacing:-0.264px;">2025-12-28 11:52:02</div>
<div class="t" style="left:1698.4px;top:811.76px;font-size:16px;line-height:22px;color:#424242;font-weight:400;letter-spacing:-0.420px;">819 ms</div>
<svg class="b" style="left:1943px;top:812px;" width="20" height="20" viewBox="0 0 20 20"><circle cx="10" cy="10" r="8.5" fill="#187a34"/><path d="M6.8 10.2 L9 12.3 L13.3 8" stroke="#fff" stroke-width="1.4" fill="none"/></svg>
<div class="t" style="left:1973.6px;top:811.76px;font-size:16px;line-height:22px;color:#424242;font-weight:400;letter-spacing:-0.614px;">Succeeded</div>
<div class="b" style="left:437px;top:850px;width:1750px;height:1px;background:#e6e6e6;"></div>
<div class="b" style="left:452px;top:869px;width:18px;height:18px;border:1.3px solid #616161;border-radius:2px;box-sizing:border-box;"></div>
<div class="t" style="left:494.9px;top:868.26px;font-size:16px;line-height:22px;color:#424242;font-weight:400;letter-spacing:-0.538px;">00388540-4196-4C6F-83AB-D11835286494</div>
<div class="t" style="left:965.3px;top:868.43px;width:227px;overflow:hidden;font-size:15.5px;line-height:22px;color:#1d7d70;letter-spacing:-0.656px;">SELECT ols.[object_id] AS Securit</div>
<div class="t" style="left:1209.4px;top:868.26px;font-size:16px;line-height:22px;color:#424242;font-weight:400;letter-spacing:-0.173px;">npakala@microsoft.com</div>
<div class="t" style="left:1453.6px;top:868.26px;font-size:16px;line-height:22px;color:#424242;font-weight:400;letter-spacing:-0.264px;">2025-12-28 11:52:02</div>
<div class="t" style="left:1698.4px;top:868.26px;font-size:16px;line-height:22px;color:#424242;font-weight:400;letter-spacing:-0.420px;">818 ms</div>
<svg class="b" style="left:1943px;top:868px;" width="20" height="20" viewBox="0 0 20 20"><circle cx="10" cy="10" r="8.5" fill="#187a34"/><path d="M6.8 10.2 L9 12.3 L13.3 8" stroke="#fff" stroke-width="1.4" fill="none"/></svg>
<div class="t" style="left:1973.6px;top:868.26px;font-size:16px;line-height:22px;color:#424242;font-weight:400;letter-spacing:-0.614px;">Succeeded</div>
<div class="b" style="left:437px;top:906px;width:1750px;height:1px;background:#e6e6e6;"></div>
<div class="b" style="left:452px;top:926px;width:18px;height:18px;border:1.3px solid #616161;border-radius:2px;box-sizing:border-box;"></div>
<div class="t" style="left:494.9px;top:924.76px;font-size:16px;line-height:22px;color:#424242;font-weight:400;letter-spacing:-0.569px;">12A69D6D-446A-45F6-AD48-BFDB8B9BF935</div>
<div class="t" style="left:965.3px;top:924.93px;width:227px;overflow:hidden;font-size:15.5px;line-height:22px;color:#1d7d70;letter-spacing:-0.753px;">SELECT COALESCE(obj.[object_id</div>
<div class="t" style="left:1209.4px;top:924.76px;font-size:16px;line-height:22px;color:#424242;font-weight:400;letter-spacing:-0.173px;">npakala@microsoft.com</div>
<div class="t" style="left:1453.6px;top:924.76px;font-size:16px;line-height:22px;color:#424242;font-weight:400;letter-spacing:-0.264px;">2025-12-28 11:52:02</div>
<div class="t" style="left:1698.4px;top:924.76px;font-size:16px;line-height:22px;color:#424242;font-weight:400;letter-spacing:-0.420px;">817 ms</div>
<svg class="b" style="left:1943px;top:924px;" width="20" height="20" viewBox="0 0 20 20"><circle cx="10" cy="10" r="8.5" fill="#187a34"/><path d="M6.8 10.2 L9 12.3 L13.3 8" stroke="#fff" stroke-width="1.4" fill="none"/></svg>
<div class="t" style="left:1973.6px;top:924.76px;font-size:16px;line-height:22px;color:#424242;font-weight:400;letter-spacing:-0.614px;">Succeeded</div>
<div class="b" style="left:437px;top:962px;width:1750px;height:1px;background:#e6e6e6;"></div>
<div class="b" style="left:452px;top:982px;width:18px;height:18px;border:1.3px solid #616161;border-radius:2px;box-sizing:border-box;"></div>
<div class="t" style="left:494.9px;top:981.26px;font-size:16px;line-height:22px;color:#424242;font-weight:400;letter-spacing:-0.545px;">03F2565E-59A1-4401-8658-579D94CD5025</div>
<div class="t" style="left:965.3px;top:981.43px;width:227px;overflow:hidden;font-size:15.5px;line-height:22px;color:#1d7d70;letter-spacing:-0.800px;">SELECT schema_name(tab.schem</div>
<div class="t" style="left:1209.4px;top:981.26px;font-size:16px;line-height:22px;color:#424242;font-weight:400;letter-spacing:-0.173px;">npakala@microsoft.com</div>
<div class="t" style="left:1453.6px;top:981.26px;font-size:16px;line-height:22px;color:#424242;font-weight:400;letter-spacing:-0.264px;">2025-12-28 11:52:02</div>
<div class="t" style="left:1698.4px;top:981.26px;font-size:16px;line-height:22px;color:#424242;font-weight:400;letter-spacing:-0.411px;">811 ms</div>
<svg class="b" style="left:1943px;top:981px;" width="20" height="20" viewBox="0 0 20 20"><circle cx="10" cy="10" r="8.5" fill="#187a34"/><path d="M6.8 10.2 L9 12.3 L13.3 8" stroke="#fff" stroke-width="1.4" fill="none"/></svg>
<div class="t" style="left:1973.6px;top:981.26px;font-size:16px;line-height:22px;color:#424242;font-weight:400;letter-spacing:-0.614px;">Succeeded</div>
<div class="b" style="left:437px;top:1019px;width:1750px;height:1px;background:#e6e6e6;"></div>
<div class="b" style="left:452px;top:1038px;width:18px;height:18px;border:1.3px solid #616161;border-radius:2px;box-sizing:border-box;"></div>
<div class="t" style="left:494.9px;top:1037.76px;font-size:16px;line-height:22px;color:#424242;font-weight:400;letter-spacing:-0.579px;">C35C18CD-24BD-425A-85B5-5C4AD5FED919</div>
<div class="t" style="left:965.3px;top:1037.93px;width:227px;overflow:hidden;font-size:15.5px;line-height:22px;color:#1d7d70;letter-spacing:-0.780px;">SELECT OBJECT_NAME([f].[paren</div>
<div class="t" style="left:1209.4px;top:1037.76px;font-size:16px;line-height:22px;color:#424242;font-weight:400;letter-spacing:-0.173px;">npakala@microsoft.com</div>
<div class="t" style="left:1453.6px;top:1037.76px;font-size:16px;line-height:22px;color:#424242;font-weight:400;letter-spacing:-0.264px;">2025-12-28 11:52:02</div>
<div class="t" style="left:1698.4px;top:1037.76px;font-size:16px;line-height:22px;color:#424242;font-weight:400;letter-spacing:-0.420px;">672 ms</div>
<svg class="b" style="left:1943px;top:1038px;" width="20" height="20" viewBox="0 0 20 20"><circle cx="10" cy="10" r="8.5" fill="#187a34"/><path d="M6.8 10.2 L9 12.3 L13.3 8" stroke="#fff" stroke-width="1.4" fill="none"/></svg>
<div class="t" style="left:1973.6px;top:1037.76px;font-size:16px;line-height:22px;color:#424242;font-weight:400;letter-spacing:-0.614px;">Succeeded</div>
<div class="b" style="left:437px;top:1076px;width:1750px;height:1px;background:#e6e6e6;"></div>
<div class="b" style="left:452px;top:1095px;width:18px;height:18px;border:1.3px solid #616161;border-radius:2px;box-sizing:border-box;"></div>
<div class="t" style="left:494.9px;top:1094.26px;font-size:16px;line-height:22px;color:#424242;font-weight:400;letter-spacing:-0.556px;">2925A044-FB00-4332-BA49-796CE8EF20DF</div>
<div class="t" style="left:965.3px;top:1094.43px;width:227px;overflow:hidden;font-size:15.5px;line-height:22px;color:#1d7d70;letter-spacing:-0.749px;">SELECT DISTINCT p.parameter_id</div>
<div class="t" style="left:1209.4px;top:1094.26px;font-size:16px;line-height:22px;color:#424242;font-weight:400;letter-spacing:-0.173px;">npakala@microsoft.com</div>
<div class="t" style="left:1453.6px;top:1094.26px;font-size:16px;line-height:22px;color:#424242;font-weight:400;letter-spacing:-0.264px;">2025-12-28 11:52:02</div>
<div class="t" style="left:1698.4px;top:1094.26px;font-size:16px;line-height:22px;color:#424242;font-weight:400;letter-spacing:-0.420px;">670 ms</div>
<svg class="b" style="left:1943px;top:1094px;" width="20" height="20" viewBox="0 0 20 20"><circle cx="10" cy="10" r="8.5" fill="#187a34"/><path d="M6.8 10.2 L9 12.3 L13.3 8" stroke="#fff" stroke-width="1.4" fill="none"/></svg>
<div class="t" style="left:1973.6px;top:1094.26px;font-size:16px;line-height:22px;color:#424242;font-weight:400;letter-spacing:-0.614px;">Succeeded</div>
<div class="b" style="left:437px;top:1132px;width:1750px;height:1px;background:#e6e6e6;"></div>
<div class="b" style="left:452px;top:1152px;width:18px;height:18px;border:1.3px solid #616161;border-radius:2px;box-sizing:border-box;"></div>
<div class="t" style="left:494.9px;top:1150.76px;font-size:16px;line-height:22px;color:#424242;font-weight:400;letter-spacing:-0.563px;">86DEAAFB-7825-421B-9390-ADA8007A508E</div>
<div class="t" style="left:965.3px;top:1150.93px;width:227px;overflow:hidden;font-size:15.5px;line-height:22px;color:#1d7d70;letter-spacing:-0.757px;">SELECT DISTINCT c.column_id AS</div>
<div class="t" style="left:1209.4px;top:1150.76px;font-size:16px;line-height:22px;color:#424242;font-weight:400;letter-spacing:-0.173px;">npakala@microsoft.com</div>
<div class="t" style="left:1453.6px;top:1150.76px;font-size:16px;line-height:22px;color:#424242;font-weight:400;letter-spacing:-0.264px;">2025-12-28 11:52:01</div>
<div class="t" style="left:1698.4px;top:1150.76px;font-size:16px;line-height:22px;color:#424242;font-weight:400;letter-spacing:-0.420px;">667 ms</div>
<svg class="b" style="left:1943px;top:1150px;" width="20" height="20" viewBox="0 0 20 20"><circle cx="10" cy="10" r="8.5" fill="#187a34"/><path d="M6.8 10.2 L9 12.3 L13.3 8" stroke="#fff" stroke-width="1.4" fill="none"/></svg>
<div class="t" style="left:1973.6px;top:1150.76px;font-size:16px;line-height:22px;color:#424242;font-weight:400;letter-spacing:-0.614px;">Succeeded</div>
<div class="b" style="left:437px;top:1188px;width:1750px;height:1px;background:#e6e6e6;"></div>
<div class="b" style="left:452px;top:1208px;width:18px;height:18px;border:1.3px solid #616161;border-radius:2px;box-sizing:border-box;"></div>
<div class="t" style="left:494.9px;top:1207.26px;font-size:16px;line-height:22px;color:#424242;font-weight:400;letter-spacing:-0.574px;">303B97BE-03BF-4C88-BDF3-41661DAACBB7</div>
<div class="t" style="left:965.3px;top:1207.43px;width:227px;overflow:hidden;font-size:15.5px;line-height:22px;color:#1d7d70;letter-spacing:-0.735px;">SELECT name from sys.schemas '</div>
<div class="t" style="left:1209.4px;top:1207.26px;font-size:16px;line-height:22px;color:#424242;font-weight:400;letter-spacing:-0.173px;">npakala@microsoft.com</div>
<div class="t" style="left:1453.6px;top:1207.26px;font-size:16px;line-height:22px;color:#424242;font-weight:400;letter-spacing:-0.264px;">2025-12-28 11:52:01</div>
<div class="t" style="left:1698.4px;top:1207.26px;font-size:16px;line-height:22px;color:#424242;font-weight:400;letter-spacing:-0.436px;">23 ms</div>
<svg class="b" style="left:1943px;top:1207px;" width="20" height="20" viewBox="0 0 20 20"><circle cx="10" cy="10" r="8.5" fill="#187a34"/><path d="M6.8 10.2 L9 12.3 L13.3 8" stroke="#fff" stroke-width="1.4" fill="none"/></svg>
<div class="t" style="left:1973.6px;top:1207.26px;font-size:16px;line-height:22px;color:#424242;font-weight:400;letter-spacing:-0.614px;">Succeeded</div>
<div class="b" style="left:437px;top:1245px;width:1750px;height:1px;background:#e6e6e6;"></div>
<div class="b" style="left:452px;top:1264px;width:18px;height:18px;border:1.3px solid #616161;border-radius:2px;box-sizing:border-box;"></div>
<div class="t" style="left:494.9px;top:1263.76px;font-size:16px;line-height:22px;color:#424242;font-weight:400;letter-spacing:-0.556px;">5728A053-62BE-4B6E-9F03-65B66D689BEF</div>
<div class="t" style="left:965.3px;top:1263.93px;width:227px;overflow:hidden;font-size:15.5px;line-height:22px;color:#1d7d70;letter-spacing:-0.675px;">SELECT o.object_id AS ObjectId, o</div>
<div class="t" style="left:1209.4px;top:1263.76px;font-size:16px;line-height:22px;color:#424242;font-weight:400;letter-spacing:-0.173px;">npakala@microsoft.com</div>
<div class="t" style="left:1453.6px;top:1263.76px;font-size:16px;line-height:22px;color:#424242;font-weight:400;letter-spacing:-0.264px;">2025-12-28 11:52:01</div>
<div class="t" style="left:1698.4px;top:1263.76px;font-size:16px;line-height:22px;color:#424242;font-weight:400;letter-spacing:-0.436px;">22 ms</div>
<svg class="b" style="left:1943px;top:1264px;" width="20" height="20" viewBox="0 0 20 20"><circle cx="10" cy="10" r="8.5" fill="#187a34"/><path d="M6.8 10.2 L9 12.3 L13.3 8" stroke="#fff" stroke-width="1.4" fill="none"/></svg>
<div class="t" style="left:1973.6px;top:1263.76px;font-size:16px;line-height:22px;color:#424242;font-weight:400;letter-spacing:-0.614px;">Succeeded</div>
<div class="b" style="left:437px;top:1302px;width:1750px;height:1px;background:#e6e6e6;"></div>
<div class="b" style="left:452px;top:1321px;width:18px;height:18px;border:1.3px solid #616161;border-radius:2px;box-sizing:border-box;"></div>
<div class="t" style="left:494.9px;top:1320.26px;font-size:16px;line-height:22px;color:#424242;font-weight:400;letter-spacing:-0.553px;">6B999252-32B9-4803-AC8D-39B54E56C261</div>
<div class="t" style="left:965.3px;top:1320.43px;width:227px;overflow:hidden;font-size:15.5px;line-height:22px;color:#1d7d70;letter-spacing:-0.725px;">DECLARE @IncludeDefinition BIT</div>
<div class="t" style="left:1209.4px;top:1320.26px;font-size:16px;line-height:22px;color:#424242;font-weight:400;letter-spacing:-0.173px;">npakala@microsoft.com</div>
<div class="t" style="left:1453.6px;top:1320.26px;font-size:16px;line-height:22px;color:#424242;font-weight:400;letter-spacing:-0.264px;">2025-12-28 11:52:01</div>
<div class="t" style="left:1698.4px;top:1320.26px;font-size:16px;line-height:22px;color:#424242;font-weight:400;letter-spacing:-0.436px;">10 ms</div>
<svg class="b" style="left:1943px;top:1320px;" width="20" height="20" viewBox="0 0 20 20"><circle cx="10" cy="10" r="8.5" fill="#187a34"/><path d="M6.8 10.2 L9 12.3 L13.3 8" stroke="#fff" stroke-width="1.4" fill="none"/></svg>
<div class="t" style="left:1973.6px;top:1320.26px;font-size:16px;line-height:22px;color:#424242;font-weight:400;letter-spacing:-0.614px;">Succeeded</div>
<div class="b" style="left:437px;top:1358px;width:1750px;height:1px;background:#e6e6e6;"></div>
<div class="b" style="left:452px;top:1378px;width:18px;height:18px;border:1.3px solid #616161;border-radius:2px;box-sizing:border-box;"></div>
<div class="t" style="left:494.9px;top:1376.76px;font-size:16px;line-height:22px;color:#424242;font-weight:400;letter-spacing:-0.551px;">E1496CA9-6722-4052-8A58-9FD5D524554A</div>
<div class="t" style="left:965.3px;top:1376.93px;width:227px;overflow:hidden;font-size:15.5px;line-height:22px;color:#1d7d70;letter-spacing:-0.838px;">SET LOCK_TIMEOUT 5000;</div>
<div class="t" style="left:1209.4px;top:1376.76px;font-size:16px;line-height:22px;color:#424242;font-weight:400;letter-spacing:-0.173px;">npakala@microsoft.com</div>
<div class="t" style="left:1453.6px;top:1376.76px;font-size:16px;line-height:22px;color:#424242;font-weight:400;letter-spacing:-0.264px;">2025-12-28 11:52:01</div>
<div class="t" style="left:1698.4px;top:1376.76px;font-size:16px;line-height:22px;color:#424242;font-weight:400;letter-spacing:-0.436px;">10 ms</div>
<svg class="b" style="left:1943px;top:1376px;" width="20" height="20" viewBox="0 0 20 20"><circle cx="10" cy="10" r="8.5" fill="#187a34"/><path d="M6.8 10.2 L9 12.3 L13.3 8" stroke="#fff" stroke-width="1.4" fill="none"/></svg>
<div class="t" style="left:1973.6px;top:1376.76px;font-size:16px;line-height:22px;color:#424242;font-weight:400;letter-spacing:-0.614px;">Succeeded</div>
<div class="b" style="left:437px;top:1414px;width:1750px;height:1px;background:#e6e6e6;"></div>
<div class="b" style="left:452px;top:1434px;width:18px;height:18px;border:1.3px solid #616161;border-radius:2px;box-sizing:border-box;"></div>
<div class="t" style="left:494.9px;top:1433.26px;font-size:16px;line-height:22px;color:#424242;font-weight:400;letter-spacing:-0.559px;">D4DD755B-4D55-41B5-A56D-504466949494A</div>
<div class="t" style="left:965.3px;top:1433.43px;width:227px;overflow:hidden;font-size:15.5px;line-height:22px;color:#1d7d70;letter-spacing:-0.731px;">SELECT DISTINCT c.object_id AS</div>
<div class="t" style="left:1209.4px;top:1433.26px;font-size:16px;line-height:22px;color:#424242;font-weight:400;letter-spacing:-0.173px;">npakala@microsoft.com</div>
<div class="t" style="left:1453.6px;top:1433.26px;font-size:16px;line-height:22px;color:#424242;font-weight:400;letter-spacing:-0.264px;">2025-12-28 11:52:00</div>
<div class="t" style="left:1698.4px;top:1433.26px;font-size:16px;line-height:22px;color:#424242;font-weight:400;letter-spacing:-0.420px;">604 ms</div>
<svg class="b" style="left:1943px;top:1433px;" width="20" height="20" viewBox="0 0 20 20"><circle cx="10" cy="10" r="8.5" fill="#187a34"/><path d="M6.8 10.2 L9 12.3 L13.3 8" stroke="#fff" stroke-width="1.4" fill="none"/></svg>
<div class="t" style="left:1973.6px;top:1433.26px;font-size:16px;line-height:22px;color:#424242;font-weight:400;letter-spacing:-0.614px;">Succeeded</div>
<svg class="b" style="left:2189px;top:743px;" width="12" height="8" viewBox="0 0 12 8"><path d="M1.5 7 L6 1.5 L10.5 7z" fill="#8a8a8a"/></svg>
<div class="b" style="left:2190px;top:757px;width:9px;height:56px;background:#8a8a8a;border-radius:5px;"></div>
<svg class="b" style="left:2233px;top:234px;" width="12" height="8" viewBox="0 0 12 8"><path d="M1.5 7 L6 1.5 L10.5 7z" fill="#8a8a8a"/></svg>
<div class="b" style="left:2234px;top:249px;width:10px;height:880px;background:#8a8a8a;border-radius:5px;"></div>
<svg class="b" style="left:2233px;top:1425px;" width="12" height="8" viewBox="0 0 12 8"><path d="M1.5 1 L6 6.5 L10.5 1z" fill="#8a8a8a"/></svg>
<svg class="b" style="left:798px;top:628px;" width="24" height="28" viewBox="0 0 24 28"><path d="M5.3 4.3 V22.3 Q5.3 23.2 6.1 22.6 L9.3 19.6 L11.6 24.6 Q12.3 25.6 13.3 25.1 Q14.4 24.5 13.9 23.4 L11.8 18.6 H17.2 Q18.6 18.5 17.6 17.4z" fill="#ffffff" stroke="#2e2e2e" stroke-width="1.25" stroke-linejoin="round"/></svg>
</div>
</body></html>
